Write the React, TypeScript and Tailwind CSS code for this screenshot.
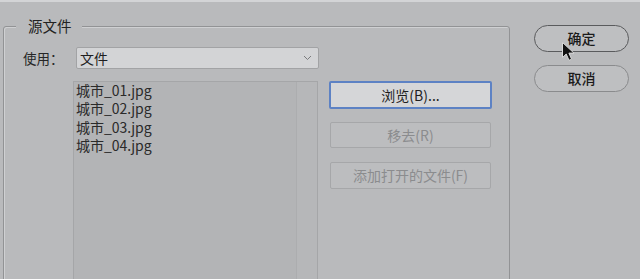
import React from "react";

const font = { fontFamily: '"Noto Sans CJK SC", "Noto Sans", sans-serif' };

function Cursor() {
  return (
    <svg width="15" height="21" viewBox="0 0 15 21" className="absolute left-[561px] top-[41px]">
      <path d="M1.5 1.5 L1.5 16.5 L5.2 13 L8 19.3 L10.6 18.2 L7.9 12.1 L13 12.1 Z" fill="#111" stroke="#d8d8d8" strokeWidth="1" strokeLinejoin="round" />
    </svg>
  );
}

export default function App() {
  return (
    <div className="relative w-[640px] h-[279px] overflow-hidden bg-[#b9babc] text-[#262626]" style={font}>
      <div className="h-[2px] bg-[#d3d4d6]" />
      <div className="flex pt-[24px]">
        {/* group box */}
        <div className="relative ml-[3px] w-[507px] h-[300px] rounded-[3px] border border-[#929395] shadow-[inset_1px_1px_0_#cfd0d2]">
          <div className="absolute left-[12px] -top-[10px] pl-[12px] pr-[10px] bg-[#b9babc] text-[14.5px] leading-[18px] text-[#222]">源文件</div>
          <div className="flex items-center pt-[20px]">
            <div className="ml-[19px] w-[53px] text-[13.5px] leading-[18px]">使用：</div>
            <div className="flex items-center justify-between w-[243px] h-[22px] rounded-[2px] border border-[#a2a3a5] bg-[#d3d4d6] pl-[3px] pr-[6px]">
              <span className="text-[14px] leading-[18px] text-[#1e1e1e]">文件</span>
              <svg width="9" height="6" viewBox="0 0 9 6">
                <path d="M1 1 L4.5 4.5 L8 1" fill="none" stroke="#7a7b7d" strokeWidth="1" />
              </svg>
            </div>
          </div>
          <div className="flex mt-[12px] ml-[69px]">
            <div className="flex w-[245px] h-[210px] border border-[#a5a6a8] bg-[#b3b4b6]">
              <div className="flex-1 pl-[2px] -mt-[1px] text-[14px] leading-[18.4px] text-[#2a2a2a]">
                <div>城市_01.jpg</div>
                <div>城市_02.jpg</div>
                <div>城市_03.jpg</div>
                <div>城市_04.jpg</div>
              </div>
              <div className="w-[21px] border-l border-[#acadaf] bg-[#b6b7b9]" />
            </div>
            <div className="flex flex-col ml-[11px] w-[163px]">
              <div className="flex items-center justify-center h-[28px] rounded-[2px] border-2 border-[#5d82c4] bg-[#d5d6d8] text-[14px] text-[#1e1e1e]">
                浏览(B)...
              </div>
              <div className="flex items-center justify-center mt-[13px] mx-[1px] h-[26px] rounded-[2px] border border-[#a6a7a9] bg-[#bcbdbf] text-[14px] text-[#8b8c8e]">
                移去(R)
              </div>
              <div className="flex items-center justify-center mt-[14px] mx-[1px] h-[27px] rounded-[2px] border border-[#a6a7a9] bg-[#bcbdbf] text-[14px] text-[#8b8c8e]">
                添加打开的文件(F)
              </div>
            </div>
          </div>
        </div>
        {/* right buttons */}
        <div className="flex flex-col ml-[24px] -mt-[1px] w-[95px]">
          <div className="flex items-center justify-center h-[27px] rounded-full border border-[#5a5b5d] bg-[#bebfc1] text-[14px] font-medium text-[#1a1a1a]">
            确定
          </div>
          <div className="flex items-center justify-center mt-[13px] h-[27px] rounded-full border border-[#8a8b8d] bg-[#bebfc1] text-[14px] font-medium text-[#1a1a1a]">
            取消
          </div>
        </div>
      </div>
      <Cursor />
    </div>
  );
}
